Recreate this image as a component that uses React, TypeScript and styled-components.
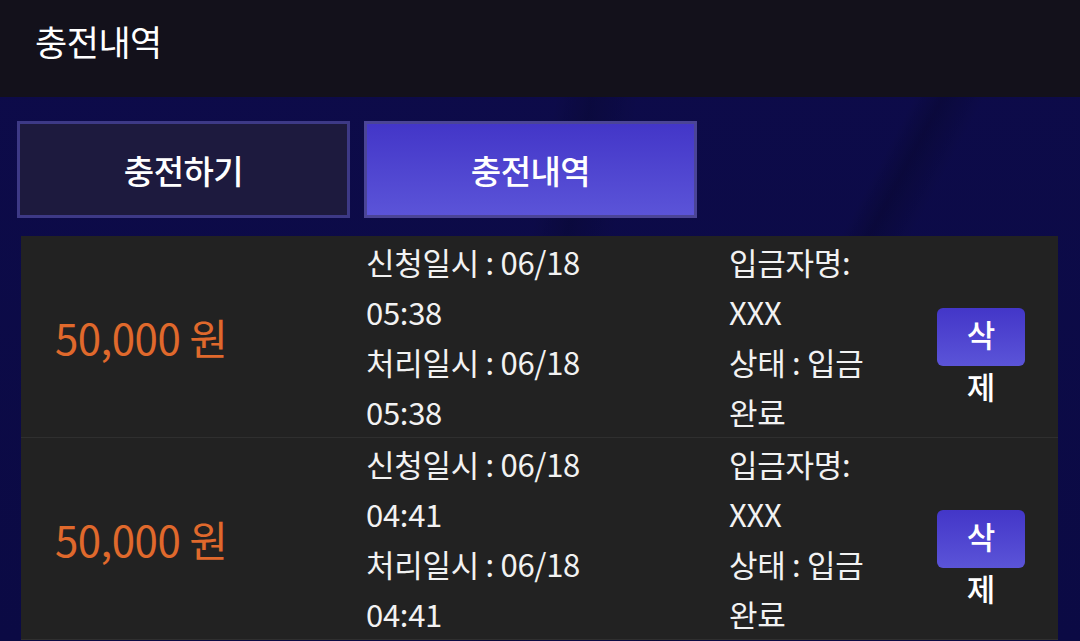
import * as React from 'react';
import styled, { createGlobalStyle } from 'styled-components';

const GlobalStyle = createGlobalStyle`
    html, body {
        margin: 0;
        padding: 0;
        background: #0c0a46;
    }
    * {
        box-sizing: border-box;
    }
`;

const Page = styled.div`
    width: 1080px;
    height: 641px;
    overflow: hidden;
    font-family: 'Noto Sans CJK KR', 'Noto Sans', sans-serif;
    color: #fff;
    background:
        linear-gradient(118deg, transparent 68%, rgba(0, 0, 0, 0.18) 70%, transparent 73%),
        linear-gradient(100deg, transparent 48%, rgba(0, 0, 0, 0.15) 51%, transparent 55%),
        linear-gradient(180deg, #0d0b4a 0%, #0b0a44 100%);
`;

const Header = styled.div`
    height: 97px;
    background: #13111b;
    display: flex;
    align-items: center;
    padding: 0 0 16px 35px;
    font-size: 35px;
    font-weight: 400;
    letter-spacing: -0.5px;
`;

const Tabs = styled.div`
    display: flex;
    gap: 14px;
    padding: 24px 0 0 17px;
`;

const Tab = styled.div<{ active?: boolean }>`
    width: 333px;
    height: 97px;
    display: flex;
    align-items: center;
    justify-content: center;
    font-size: 33px;
    font-weight: 500;
    letter-spacing: -0.5px;
    border: 3px solid ${props => (props.active ? '#4b4596' : '#3d3986')};
    background: ${props => (props.active ? 'linear-gradient(180deg, #4336c8 0%, #5b54d8 100%)' : '#1d1a3e')};
`;

const Table = styled.div`
    margin: 18px 22px 0 21px;
    background: #222222;
`;

const Row = styled.div`
    display: grid;
    grid-template-columns: 345px 363px 179px 150px;
    align-items: center;
    height: 202px;
    border-bottom: 1px solid #2f2f2f;
`;

const Amount = styled.div`
    padding-left: 34px;
    font-size: 42px;
    color: #e0692c;
    letter-spacing: -0.5px;
`;

const Info = styled.div`
    font-size: 31px;
    line-height: 50px;
    letter-spacing: -0.3px;
    color: #f2f2f2;
`;

const ActionCell = styled.div`
    display: flex;
    justify-content: center;
    padding-right: 4px;
`;

const DeleteButton = styled.div`
    width: 88px;
    height: 58px;
    border-radius: 6px;
    background: linear-gradient(180deg, #4336c8 0%, #5b54d8 100%);
    font-size: 31px;
    font-weight: 500;
    line-height: 52px;
    text-align: center;
    padding: 0 22px;
    word-break: break-all;
    overflow: visible;
`;

const rows = [
    { amount: '50,000 원', req: '06/18 05:38', done: '06/18 05:38' },
    { amount: '50,000 원', req: '06/18 04:41', done: '06/18 04:41' },
];

const App = () => {
    return (
        <Page>
            <GlobalStyle />
            <Header>충전내역</Header>
            <Tabs>
                <Tab>충전하기</Tab>
                <Tab active>충전내역</Tab>
            </Tabs>
            <Table>
                {rows.map((r, i) => {
                    const [rd, rt] = r.req.split(' ');
                    const [dd, dt] = r.done.split(' ');
                    return (
                        <Row key={i}>
                            <Amount>{r.amount}</Amount>
                            <Info>
                                <div>신청일시 : {rd}</div>
                                <div>{rt}</div>
                                <div>처리일시 : {dd}</div>
                                <div>{dt}</div>
                            </Info>
                            <Info>
                                <div>입금자명:</div>
                                <div>XXX</div>
                                <div>상태 : 입금</div>
                                <div>완료</div>
                            </Info>
                            <ActionCell>
                                <DeleteButton>삭제</DeleteButton>
                            </ActionCell>
                        </Row>
                    );
                })}
            </Table>
        </Page>
    );
};

export default App;
